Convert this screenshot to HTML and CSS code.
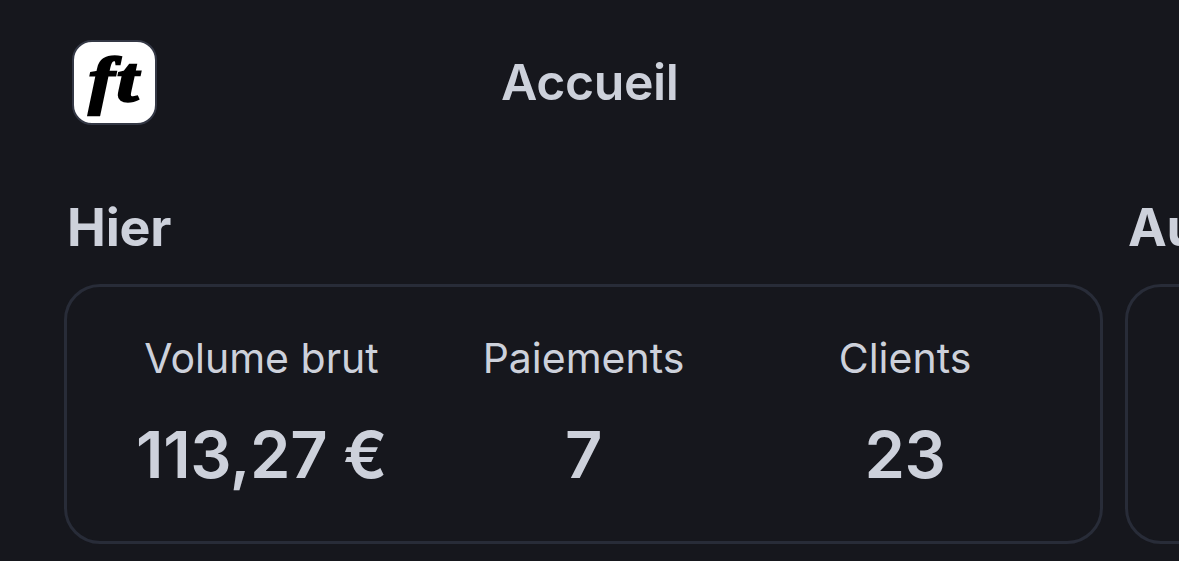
FILE: index.html
```html
<!DOCTYPE html>
<html lang="fr">

<head>
    <title>Accueil</title>
    <meta charset="UTF-8">
    <link rel="stylesheet" href="styles.css">
</head>

<body>
    <div class="header">
        <div class="logo"><span>ft</span></div>
        <h1>Accueil</h1>
    </div>

    <div class="sections">
        <section class="section">
            <h2>Hier</h2>
            <div class="card">
                <div class="stat stat-volume">
                    <span class="stat-label">Volume brut</span>
                    <span class="stat-value">113,27 €</span>
                </div>
                <div class="stat stat-payments">
                    <span class="stat-label">Paiements</span>
                    <span class="stat-value">7</span>
                </div>
                <div class="stat stat-clients">
                    <span class="stat-label">Clients</span>
                    <span class="stat-value">23</span>
                </div>
            </div>
        </section>
        <section class="section">
            <h2>Aujourd'hui</h2>
            <div class="card"></div>
        </section>
    </div>
</body>

</html>
```

FILE: styles.css
```css
html,
body {
    height: 100%;
    overflow: hidden;
}

body {
    margin: 0;
    background-color: #16171d;
    color: #cdd1db;
    font-family: Inter, "Noto Sans", sans-serif;
}

.header {
    display: flex;
    align-items: center;
    height: 84px;
    padding: 40px 0 0 72px;
}

.logo {
    display: flex;
    align-items: center;
    justify-content: center;
    box-sizing: border-box;
    width: 85px;
    height: 85px;
    background-color: #fff;
    border: 2px solid #343845;
    border-radius: 20px;
}

.logo span {
    color: #000;
    font-family: "Liberation Serif", serif;
    font-size: 64px;
    font-style: italic;
    font-weight: 700;
    line-height: 1;
    letter-spacing: 2px;
    -webkit-text-stroke: 2.5px #000;
    transform: scaleX(1.2) translateY(-2px);
}

.header h1 {
    margin: 0 0 0 344px;
    font-size: 50px;
    font-weight: 600;
    letter-spacing: -0.4px;
}

.sections {
    display: flex;
    gap: 22px;
    padding: 0 0 0 64px;
    margin-top: 74px;
}

.section {
    flex: 0 0 1039px;
}

.section h2 {
    margin: 0 0 26px 3px;
    font-size: 52px;
    font-weight: 700;
    line-height: 60px;
    letter-spacing: -0.2px;
}

.card {
    display: flex;
    box-sizing: border-box;
    height: 260px;
    padding: 48px 0 0;
    border: 3px solid #282c38;
    border-radius: 36px;
}

.stat {
    display: flex;
    flex-direction: column;
    align-items: center;
    gap: 37px;
}

.stat-volume {
    width: 389px;
}

.stat-payments {
    width: 255px;
}

.stat-clients {
    width: 388px;
}

.stat-label {
    font-size: 41px;
    line-height: 46px;
}

.stat-value {
    font-size: 65px;
    font-weight: 600;
    line-height: 74px;
    letter-spacing: -0.4px;
}
```
